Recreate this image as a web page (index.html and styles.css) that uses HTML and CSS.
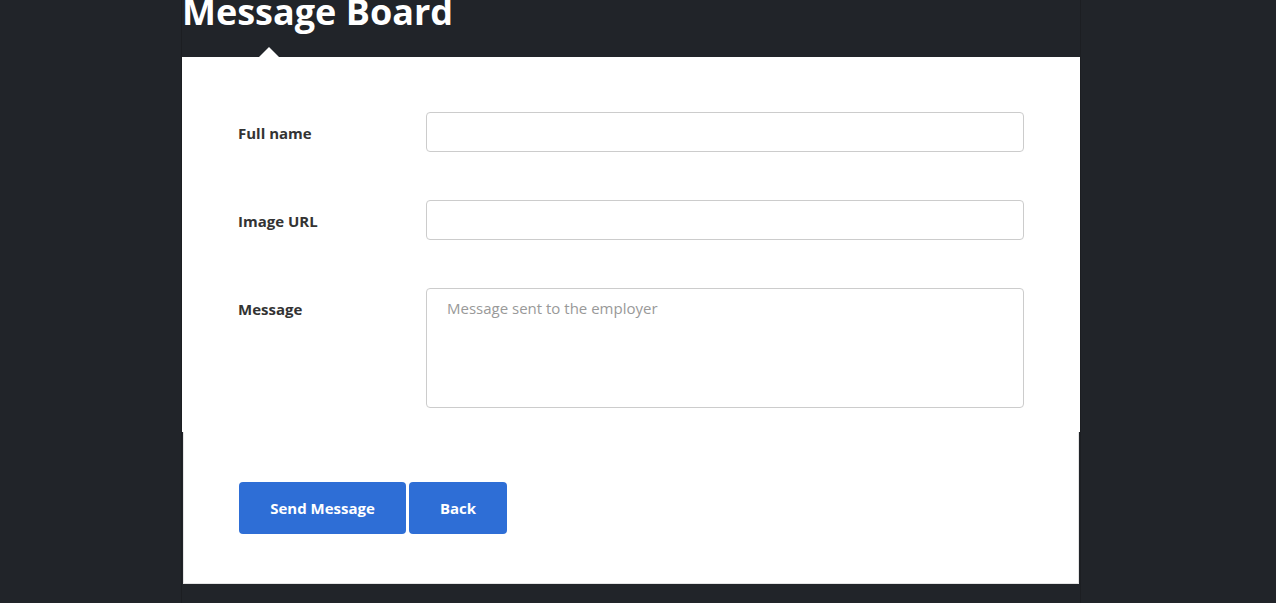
FILE: index.html
```html
<!DOCTYPE html>
<html>
<head>
<meta charset="utf-8">
<link rel="stylesheet" href="styles.css">
</head>
<body>
<div class="page">
  <header class="header">
    <h1 class="title">Message Board</h1>
  </header>
  <main class="card">
    <form class="form">
      <div class="row">
        <label class="label">Full name</label>
        <input class="field" type="text">
      </div>
      <div class="row">
        <label class="label">Image URL</label>
        <input class="field" type="text">
      </div>
      <div class="row">
        <label class="label">Message</label>
        <textarea class="field area" placeholder="Message sent to the employer"></textarea>
      </div>
    </form>
    <div class="actions">
      <button class="btn btn-send" type="button">Send Message</button>
      <button class="btn btn-back" type="button">Back</button>
    </div>
  </main>
</div>
</body>
</html>
```
FILE: styles.css
```css
html, body {
  margin: 0;
  padding: 0;
  background: #212429;
  font-family: "Open Sans", "Noto Sans", sans-serif;
}
.page {
  margin-left: 181px;
  width: 898px;
  min-height: 603px;
  border-left: 1px solid #1c1e22;
  border-right: 1px solid #1c1e22;
  overflow: hidden;
}
.header {
  display: flow-root;
  height: 33px;
  margin-bottom: 24px;
}
.title {
  margin: -10px 0 0 0;
  font-size: 36px;
  line-height: 43px;
  font-weight: 700;
  color: #ffffff;
}
.card {
  position: relative;
}
.card::before {
  content: "";
  position: absolute;
  left: 77px;
  top: -10px;
  border-left: 10px solid transparent;
  border-right: 10px solid transparent;
  border-bottom: 10px solid #ffffff;
}
.form {
  background: #ffffff;
  padding: 55px 56px 24px 56px;
  display: flex;
  flex-direction: column;
  gap: 48px;
}
.row {
  display: flex;
  align-items: flex-start;
}
.label {
  width: 188px;
  height: 40px;
  font-size: 15px;
  line-height: 42px;
  font-weight: 700;
  color: #333333;
}
.field {
  box-sizing: border-box;
  width: 598px;
  height: 40px;
  margin: 0;
  border: 1px solid #cccccc;
  border-radius: 4px;
  background: #ffffff;
  font-family: "Open Sans", "Noto Sans", sans-serif;
  font-size: 15px;
  padding: 8px 20px;
  color: #333;
}
.area {
  height: 120px;
  resize: none;
  line-height: 22px;
  padding: 8px 20px;
}
.area::placeholder {
  color: #999999;
}
.actions {
  background: #ffffff;
  margin: 0 1px;
  border: 1px solid #e4e4e4;
  border-top: none;
  padding: 50px 0 49px 55px;
  display: flex;
  gap: 3px;
}
.btn {
  height: 52px;
  border: none;
  border-radius: 4px;
  background: #2e6ed6;
  color: #ffffff;
  font-family: "Open Sans", "Noto Sans", sans-serif;
  font-size: 15px;
  font-weight: 700;
  cursor: pointer;
}
.btn-send {
  width: 167px;
}
.btn-back {
  width: 98px;
}
```
